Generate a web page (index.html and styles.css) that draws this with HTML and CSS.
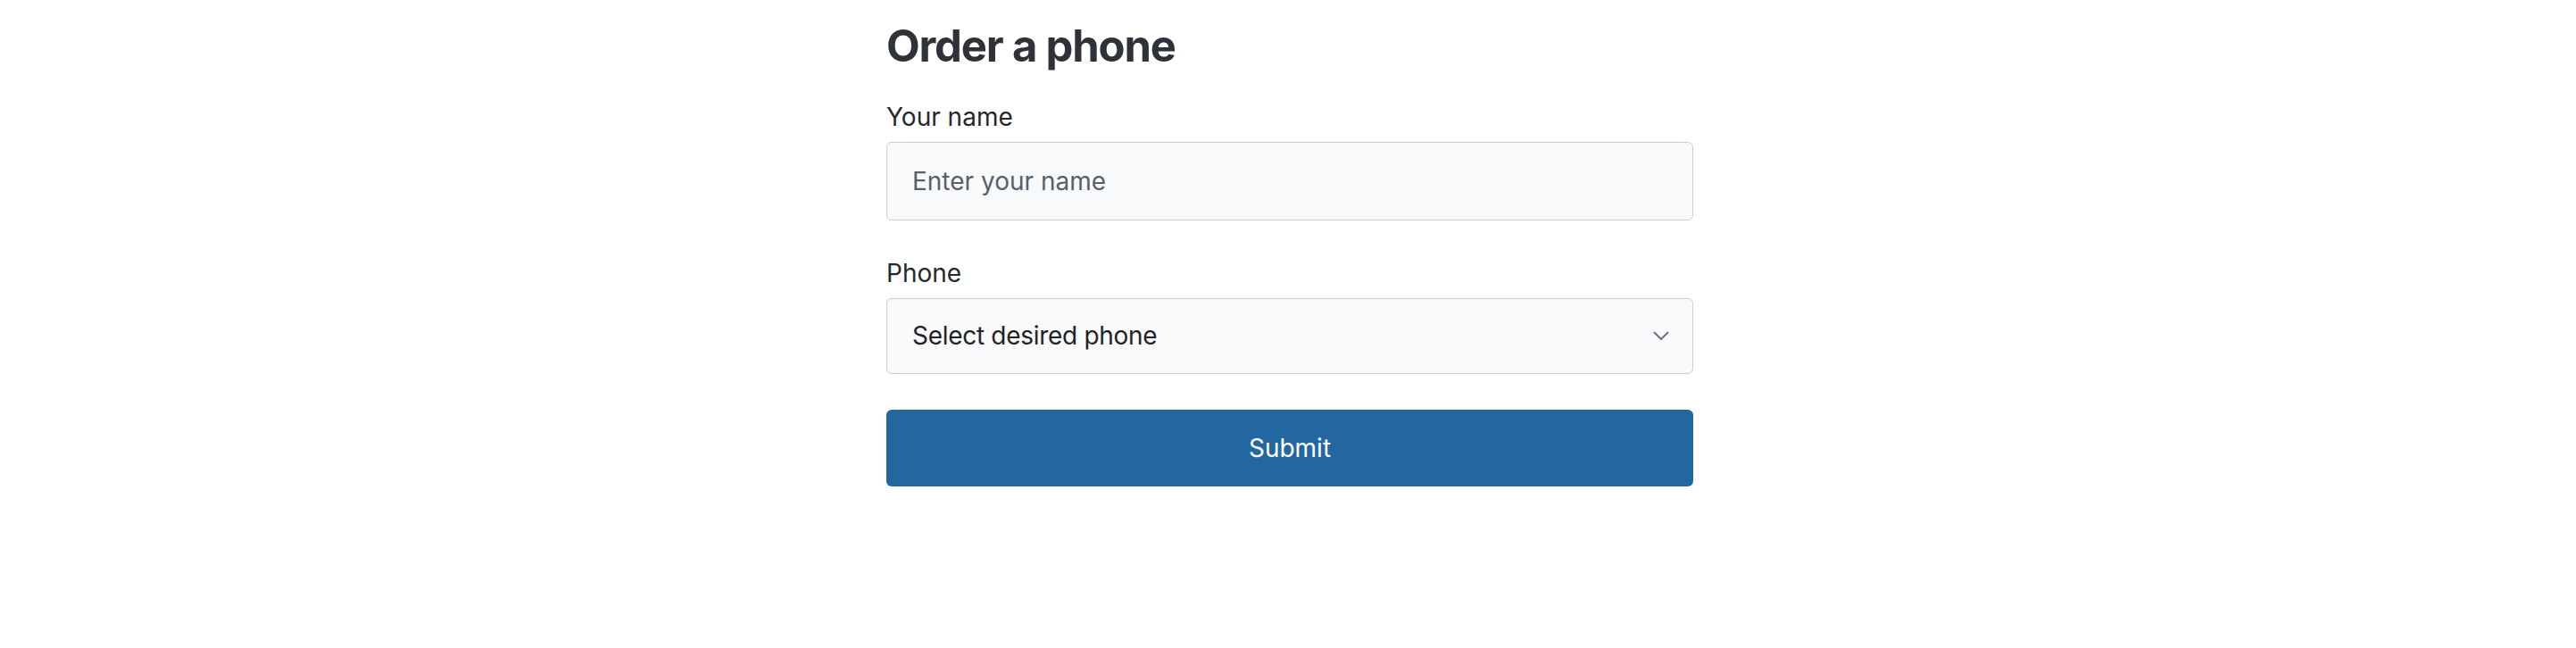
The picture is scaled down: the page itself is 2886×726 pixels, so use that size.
FILE: index.html
```html
<!DOCTYPE html>
<html lang="en">
<head>
    <meta charset="UTF-8">
    <meta name="viewport" content="width=device-width, initial-scale=1.0">
    <title>Order a phone</title>
    <link rel="stylesheet" href="styles.css">
</head>
<body>
    <div class="container">
        <h1>Order a phone</h1>
        <form id="order-form">
            <div class="field">
                <label for="name">Your name</label>
                <input type="text" id="name" placeholder="Enter your name">
            </div>
            <div class="field">
                <label for="phone">Phone</label>
                <div class="select-wrap">
                    <select id="phone">
                        <option value="">Select desired phone</option>
                        <option value="iphone">iPhone</option>
                        <option value="pixel">Pixel</option>
                        <option value="galaxy">Galaxy</option>
                    </select>
                    <svg class="chevron" width="18" height="11" viewBox="0 0 18 11" aria-hidden="true">
                        <path d="M1.5 1.5 L9 9 L16.5 1.5" fill="none" stroke="#6b7080" stroke-width="2" stroke-linecap="round" stroke-linejoin="round"/>
                    </svg>
                </div>
            </div>
            <button type="submit">Submit</button>
        </form>
    </div>
</body>
</html>
```

FILE: styles.css
```css
body {
    font-family: Inter, "Noto Sans", Arial, sans-serif;
    background-color: #fff;
    margin: 0;
    padding: 0;
}
.container {
    width: 904px;
    margin: 0 auto;
    padding: 23px 0 0 4px;
}
h1 {
    font-size: 49px;
    line-height: 1.2;
    font-weight: 700;
    letter-spacing: -1.2px;
    color: #2f3339;
    margin: 0 0 28px;
}
form {
    display: flex;
    flex-direction: column;
}
.field {
    display: flex;
    flex-direction: column;
    margin-bottom: 38px;
}
.field + .field {
    margin-bottom: 40px;
}
label {
    font-size: 28px;
    line-height: 42px;
    color: #25292e;
    margin-bottom: 7px;
}
input,
select {
    box-sizing: border-box;
    width: 100%;
    font-family: inherit;
    font-size: 28px;
    padding: 0 28px;
    background-color: #f8f9fb;
    border: 1px solid #c9cdd8;
    border-radius: 6px;
    outline: none;
}
input {
    height: 88px;
    color: #212529;
}
input::placeholder {
    color: #585f6c;
}
.select-wrap {
    position: relative;
}
select {
    height: 85px;
    color: #1f2328;
    letter-spacing: -0.3px;
    appearance: none;
    -webkit-appearance: none;
}
.chevron {
    position: absolute;
    right: 27px;
    top: 37px;
    pointer-events: none;
}
button {
    height: 86px;
    font-family: inherit;
    font-size: 28px;
    background-color: #2367a1;
    color: #fff;
    border: none;
    border-radius: 6px;
    cursor: pointer;
}
button:hover {
    background-color: #1d5a8d;
}
```
